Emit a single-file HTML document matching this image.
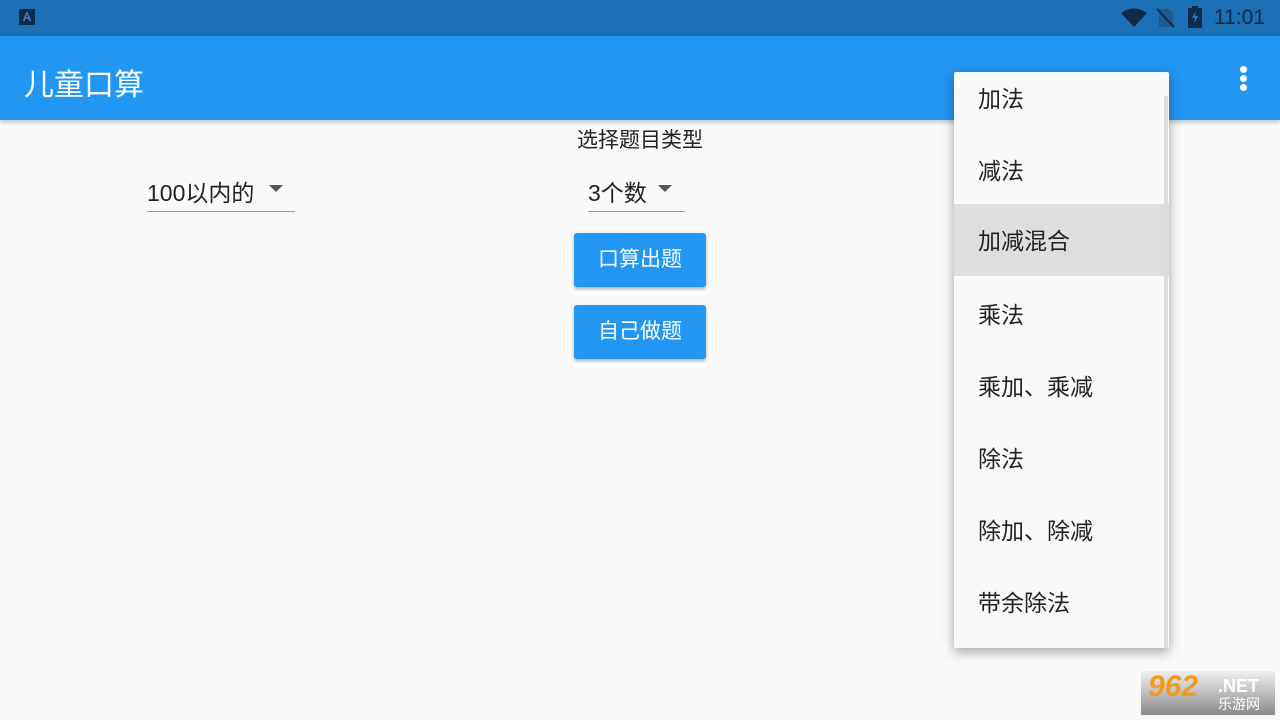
<!DOCTYPE html>
<html><head><meta charset="utf-8"><style>
body{margin:0;width:1280px;height:720px;background:#fafafa;font-family:"Liberation Sans","Noto Sans CJK SC",sans-serif;position:relative;overflow:hidden}
.abs{position:absolute}
.sb{left:0;top:0;width:1280px;height:36px;background:#1a6fb5}
.ab{left:0;top:36px;width:1280px;height:84px;background:#2196f3;box-shadow:0 2px 5px rgba(0,0,0,.25)}
.t{color:#fff;font-size:30px;left:24px;top:60px}
.txt{font-size:23px;color:#222}
.btn{background:#2196f3;color:#fff;font-size:21px;width:132px;height:54px;border-radius:3px;box-shadow:0 2px 3px rgba(0,0,0,.3);text-align:center;line-height:54px}
.menu{left:954px;top:72px;width:215px;height:576px;background:#fafafa;box-shadow:0 4px 12px rgba(0,0,0,.35);border-radius:2px}
.it{position:absolute;left:0;width:215px;height:72px;font-size:23px;color:#222;line-height:74px;padding-left:24px;box-sizing:border-box}
.tri{width:0;height:0;border-left:7px solid transparent;border-right:7px solid transparent;border-top:7px solid #555}
</style></head><body>
<div class="abs sb"></div>
<div class="abs" style="left:19px;top:9px;width:16px;height:16px;background:#0e2a4a;color:#3a8ad0;font-size:12px;font-weight:bold;text-align:center;line-height:16px">A</div>
<svg class="abs" style="left:1120px;top:8px" width="28" height="20"><path d="M1 5 Q14 -4 27 5 L14 19 Z" fill="#0d2a48"/></svg>
<svg class="abs" style="left:1156px;top:8px" width="20" height="20"><path d="M3 1 H13 L17 5 V19 H3 Z" fill="#1d5a92"/><path d="M1 1 L18 19" stroke="#0d2a48" stroke-width="2"/></svg>
<svg class="abs" style="left:1188px;top:6px" width="14" height="22"><rect x="4" y="0" width="6" height="3" fill="#0d2a48"/><rect x="0" y="2" width="14" height="20" fill="#0d2a48"/><path d="M8 5 L4 12 H7 L6 18 L10 10 H7 Z" fill="#2a7ac0"/></svg>
<div class="abs" style="left:1214px;top:6px;font-size:21px;color:#0d2a48">11:01</div>
<div class="abs ab"></div>
<div class="abs t">儿童口算</div>
<div class="abs" style="left:1240px;top:66px;width:7px;height:7px;border-radius:50%;background:#fff;box-shadow:0 9px 0 #fff,0 18px 0 #fff"></div>
<div class="abs txt" style="left:577px;top:124px;font-size:21px">选择题目类型</div>
<div class="abs txt" style="left:147px;top:174px">100以内的</div>
<div class="abs tri" style="left:269px;top:185px"></div>
<div class="abs" style="left:147px;top:211px;width:148px;height:1px;background:#999"></div>
<div class="abs txt" style="left:588px;top:174px">3个数</div>
<div class="abs tri" style="left:658px;top:185px"></div>
<div class="abs" style="left:588px;top:211px;width:97px;height:1px;background:#999"></div>
<div class="abs btn" style="left:574px;top:233px">口算出题</div>
<div class="abs btn" style="left:574px;top:305px">自己做题</div>
<div class="abs menu">
<div class="it" style="top:-10px">加法</div>
<div class="it" style="top:62px">减法</div>
<div class="it" style="top:132px;background:#dedede">加减混合</div>
<div class="it" style="top:206px">乘法</div>
<div class="it" style="top:278px">乘加、乘减</div>
<div class="it" style="top:350px">除法</div>
<div class="it" style="top:422px">除加、除减</div>
<div class="it" style="top:494px">带余除法</div>
<div style="position:absolute;left:210px;top:24px;width:4px;height:552px;background:#ddd"></div>
</div>
<div class="abs" style="left:1141px;top:671px;width:134px;height:44px;background:linear-gradient(#f0f0f0,#8a8a8a)"></div>
<div class="abs" style="left:1148px;top:670px;font-size:30px;font-weight:bold;font-style:italic;color:#f39a1e">962</div>
<div class="abs" style="left:1218px;top:676px;font-size:18px;color:#fff;font-weight:bold">.NET</div>
<div class="abs" style="left:1218px;top:694px;font-size:14px;color:#fff">乐游网</div>
</body></html>
